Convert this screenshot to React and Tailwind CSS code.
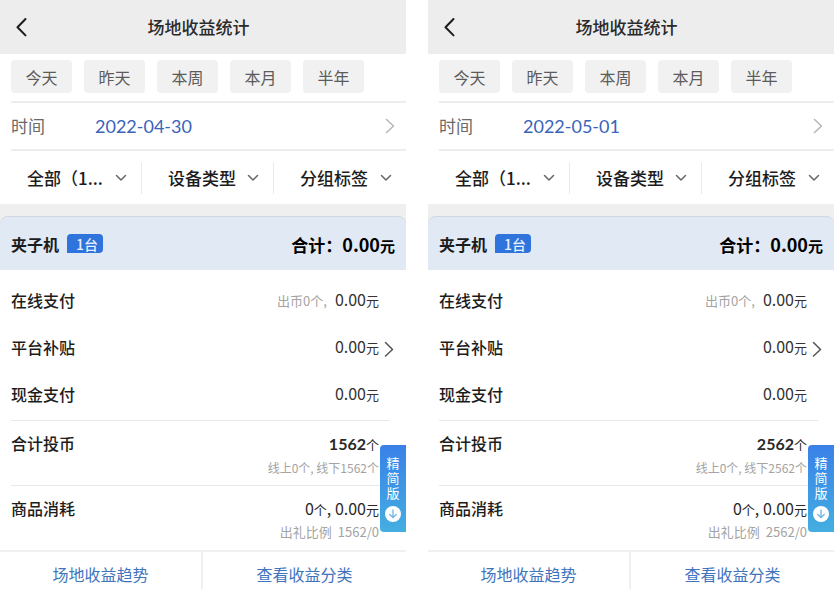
const PERIODS = ["今天", "昨天", "本周", "本月", "半年"];
const FILTERS = [
  { id: "site", name: "场地", text: "全部（1..." },
  { id: "device", name: "设备", text: "设备类型" },
  { id: "group", name: "分组", text: "分组标签" },
];

function Chevron({ className, d, box, width = 1.5 }) {
  return (
    <svg
      className={className}
      viewBox={box}
      fill="none"
      stroke="currentColor"
      strokeWidth={width}
      strokeLinecap="round"
      strokeLinejoin="round"
      aria-hidden="true"
    >
      <path d={d} />
    </svg>
  );
}

function Header() {
  return (
    <header className="flex h-[54px] items-center bg-[#ededed] pr-9">
      <button type="button" aria-label="返回" className="box-content flex h-full w-3 flex-none items-center pl-[15px]">
        <Chevron className="h-5 w-3" box="0 0 12 20" d="M10.5 2 L2.5 10.2 L10.5 18.4" width={2} />
      </button>
      <h1 className="flex-1 text-center text-[17px] font-medium text-[#2a2a2a]">场地收益统计</h1>
    </header>
  );
}

function Periods() {
  return (
    <div className="ml-[11px] flex h-[49px] items-start gap-3 border-b-2 border-[#ededed] pt-[6px]">
      {PERIODS.map((p) => (
        <button key={p} type="button" className="h-[33px] w-[61px] rounded bg-[#f1f1f1] text-base text-[#5c5c5c]">
          {p}
        </button>
      ))}
    </div>
  );
}

function DateRow({ date }) {
  return (
    <button
      type="button"
      className="ml-[11px] flex h-12 items-center self-stretch border-b-2 border-[#ededed] pr-[11px] text-left"
    >
      <span className="w-[84px] text-[17px] text-[#6a6a6a]">时间</span>
      <span className="flex-1 font-[Lato,'Noto_Sans_CJK_SC',sans-serif] text-lg text-[#3a63ba]">{date}</span>
      <Chevron className="h-4 w-[10px] text-[#b5b5b5]" box="0 0 10 16" d="M1.5 1.5 L8.5 8 L1.5 14.5" />
    </button>
  );
}

function Filters() {
  return (
    <div className="grid h-[53px] grid-cols-3 items-center pl-[10px]">
      {FILTERS.map((f, i) => (
        <div key={f.id} className={"relative flex h-8 items-center " + (i < 2 ? "border-r border-[#ebebeb]" : "")}>
          <select
            aria-label={f.name}
            className={"h-8 w-full appearance-none bg-transparent text-[17px] font-medium " + (i ? "pl-[26px]" : "pl-[17px]")}
          >
            <option>{f.text}</option>
          </select>
          <Chevron
            className="pointer-events-none absolute right-[14px] h-2 w-3 text-[#666]"
            box="0 0 12 8"
            d="M1.5 1.5 L6 6 L10.5 1.5"
          />
        </div>
      ))}
    </div>
  );
}

function Unit({ children }) {
  return <span className="text-[13px]">{children}</span>;
}

function Row({ label, more, children }) {
  return (
    <div className="flex h-[47px] items-center pr-[11px]">
      <dt className="flex-1 text-base font-medium">{label}</dt>
      <dd className="pb-[2px] text-base text-[#333]">{children}</dd>
      <dd className="w-4 pl-[5px]">
        {more && (
          <button type="button" aria-label={label + "详情"} className="block">
            <Chevron className="mt-1 h-4 w-[10px] text-[#555]" box="0 0 10 16" d="M1.5 1.5 L8.5 8.5 L1.5 15" />
          </button>
        )}
      </dd>
    </div>
  );
}

function DetailRow({ label, note, children }) {
  return (
    <div className="mr-4 flex h-[65px] items-start border-t border-[#e9e9e9] pt-[10px] pr-[11px]">
      <dt className="flex-1 text-base font-medium">{label}</dt>
      <dd className="text-right text-base text-[#2a2a2a]">
        {children}
        {note}
      </dd>
    </div>
  );
}

function Phone({ date, coins }) {
  return (
    <section className="relative flex min-w-0 flex-col">
      <Header />
      <Periods />
      <DateRow date={date} />
      <Filters />
      <div className="bg-[#efeff0] pt-3">
        <div className="flex h-[54px] items-center rounded-t-lg border-t border-[#cfd7e0] bg-[#e1e9f4] pr-[11px] pl-[11px]">
          <h2 className="text-base font-bold">夹子机</h2>
          <span className="ml-2 flex h-[19px] w-9 items-center justify-center rounded-sm rounded-bl-none bg-[#2f73dc] pl-1 text-sm font-medium text-[#e6f0ff]">
            1台
          </span>
          <p className="flex-1 text-right text-[17px] font-bold text-black">
            合计：<span className="text-lg">0.00</span>
            <span className="text-[15px]">元</span>
          </p>
        </div>
      </div>
      <dl className="pt-[6px] pl-[11px]">
        <Row label="在线支付">
          <span className="mr-2 text-[13px] text-[#a3a3a3]">出币0个,</span>0.00<Unit>元</Unit>
        </Row>
        <Row label="平台补贴" more>
          0.00<Unit>元</Unit>
        </Row>
        <Row label="现金支付">
          0.00<Unit>元</Unit>
        </Row>
        <div className="h-[3px]" />
        <DetailRow
          label="合计投币"
          note={<span className="mt-1 block text-xs text-[#a3a3a3]">{`线上0个, 线下${coins}个`}</span>}
        >
          <b className="font-[Lato,'Noto_Sans_CJK_SC',sans-serif]">{coins}</b>
          <Unit>个</Unit>
        </DetailRow>
        <DetailRow
          label="商品消耗"
          note={
            <span className="mt-1 block text-[13px] leading-4 text-[#a3a3a3]">
              出礼比例<span className="ml-[6px]">{coins}/0</span>
            </span>
          }
        >
          0<Unit>个</Unit>, 0.00<Unit>元</Unit>
        </DetailRow>
      </dl>
      <nav className="grid h-[46px] grid-cols-2 border-t-2 border-[#f0f0f0] text-base text-[#3f74bd]">
        <button type="button" className="border-r-2 border-[#f0f0f0]">场地收益趋势</button>
        <button type="button">查看收益分类</button>
      </nav>
      <button
        type="button"
        className="absolute top-[445px] right-0 flex h-[87px] w-[26px] flex-col items-center rounded-l-sm bg-linear-to-b from-[#3a80e8] to-[#45aee0] pt-[10px] text-[13px] leading-[15px] text-white"
      >
        <span className="w-[13px]">精简版</span>
        <svg className="mt-[6px] h-4 w-4" viewBox="0 0 16 16" fill="none" aria-hidden="true">
          <circle cx="8" cy="8" r="8" fill="#fff" />
          <path d="M8 4 V11.5 M4.8 8.5 L8 11.7 L11.2 8.5" stroke="#6db4e4" strokeWidth="1.3" strokeLinecap="round" />
        </svg>
      </button>
    </section>
  );
}

export default function App() {
  return (
    <main className="grid h-screen grid-cols-2 gap-[22px] overflow-hidden bg-white pr-px font-['Noto_Sans_CJK_SC',sans-serif] text-[#1c1c1c]">
      <Phone date="2022-04-30" coins="1562" />
      <Phone date="2022-05-01" coins="2562" />
    </main>
  );
}
